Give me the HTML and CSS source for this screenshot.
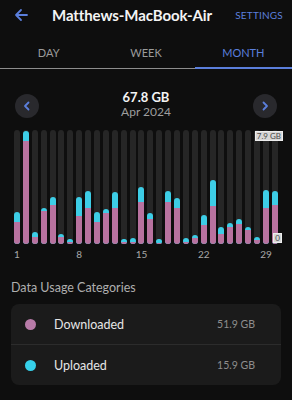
FILE: index.html
```html
<!DOCTYPE html>
<html>
<head>
<meta charset="utf-8">
<link rel="stylesheet" href="styles.css">
</head>
<body>
<div class="app">
  <header class="topbar">
    <svg class="back" width="14" height="14" viewBox="0 0 14 14"><path d="M13 7H2M7 2L2 7l5 5" fill="none" stroke="#5b7fdc" stroke-width="1.8" stroke-linecap="round" stroke-linejoin="round"/></svg>
    <h1 class="title">Matthews-MacBook-Air</h1>
    <span class="settings">SETTINGS</span>
  </header>
  <nav class="tabs">
    <div class="tab">DAY</div>
    <div class="tab">WEEK</div>
    <div class="tab active">MONTH</div>
  </nav>
  <section class="period">
    <div class="circ"><svg width="10" height="10" viewBox="0 0 10 10"><path d="M6.5 1.5L3 5l3.5 3.5" fill="none" stroke="#5b7fdc" stroke-width="1.8" stroke-linecap="round" stroke-linejoin="round"/></svg></div>
    <div class="sum">
      <div class="total">67.8 GB</div>
      <div class="month">Apr 2024</div>
    </div>
    <div class="circ"><svg width="10" height="10" viewBox="0 0 10 10"><path d="M3.5 1.5L7 5 3.5 8.5" fill="none" stroke="#5b7fdc" stroke-width="1.8" stroke-linecap="round" stroke-linejoin="round"/></svg></div>
  </section>
  <section class="chart">
    <div class="bars">
      <div class="track"><div class="fill" style="height:32px"><div class="dl" style="height:22px"></div></div></div>
      <div class="track"><div class="fill" style="height:113px"><div class="dl" style="height:103px"></div></div></div>
      <div class="track"><div class="fill" style="height:12px"><div class="dl" style="height:7px"></div></div></div>
      <div class="track"><div class="fill" style="height:36px"><div class="dl" style="height:33px"></div></div></div>
      <div class="track"><div class="fill" style="height:47px"><div class="dl" style="height:39px"></div></div></div>
      <div class="track"><div class="fill" style="height:10px"><div class="dl" style="height:7px"></div></div></div>
      <div class="track"><div class="fill" style="height:5px"><div class="dl" style="height:2px"></div></div></div>
      <div class="track"><div class="fill" style="height:47px"><div class="dl" style="height:28px"></div></div></div>
      <div class="track"><div class="fill" style="height:53px"><div class="dl" style="height:36px"></div></div></div>
      <div class="track"><div class="fill" style="height:32px"><div class="dl" style="height:22px"></div></div></div>
      <div class="track"><div class="fill" style="height:35px"><div class="dl" style="height:31px"></div></div></div>
      <div class="track"><div class="fill" style="height:52px"><div class="dl" style="height:36px"></div></div></div>
      <div class="track"><div class="fill" style="height:5px"><div class="dl" style="height:2px"></div></div></div>
      <div class="track"><div class="fill" style="height:6px"><div class="dl" style="height:2px"></div></div></div>
      <div class="track"><div class="fill" style="height:57px"><div class="dl" style="height:42px"></div></div></div>
      <div class="track"><div class="fill" style="height:31px"><div class="dl" style="height:25px"></div></div></div>
      <div class="track"><div class="fill" style="height:5px"><div class="dl" style="height:1px"></div></div></div>
      <div class="track"><div class="fill" style="height:53px"><div class="dl" style="height:42px"></div></div></div>
      <div class="track"><div class="fill" style="height:46px"><div class="dl" style="height:36px"></div></div></div>
      <div class="track"><div class="fill" style="height:6px"><div class="dl" style="height:2px"></div></div></div>
      <div class="track"><div class="fill" style="height:9px"><div class="dl" style="height:6px"></div></div></div>
      <div class="track"><div class="fill" style="height:29px"><div class="dl" style="height:19px"></div></div></div>
      <div class="track"><div class="fill" style="height:64px"><div class="dl" style="height:38px"></div></div></div>
      <div class="track"><div class="fill" style="height:17px"><div class="dl" style="height:10px"></div></div></div>
      <div class="track"><div class="fill" style="height:21px"><div class="dl" style="height:17px"></div></div></div>
      <div class="track"><div class="fill" style="height:25px"><div class="dl" style="height:20px"></div></div></div>
      <div class="track"><div class="fill" style="height:17px"><div class="dl" style="height:14px"></div></div></div>
      <div class="track"><div class="fill" style="height:7px"><div class="dl" style="height:4px"></div></div></div>
      <div class="track"><div class="fill" style="height:54px"><div class="dl" style="height:36px"></div></div></div>
      <div class="track"><div class="fill" style="height:53px"><div class="dl" style="height:39px"></div></div></div>
      <span class="tag tag-max">7.9 GB</span>
      <span class="tag tag-zero">0</span>
    </div>
    <div class="days">
      <span class="d1">1</span>
      <span class="d8">8</span>
      <span class="d15">15</span>
      <span class="d22">22</span>
      <span class="d29">29</span>
    </div>
  </section>
  <h2 class="cat-title">Data Usage Categories</h2>
  <div class="card">
    <div class="row">
      <span class="dot dot-dl"></span>
      <span class="name">Downloaded</span>
      <span class="val">51.9 GB</span>
    </div>
    <div class="row">
      <span class="dot dot-ul"></span>
      <span class="name">Uploaded</span>
      <span class="val">15.9 GB</span>
    </div>
  </div>
</div>
</body>
</html>
```
FILE: styles.css
```css
* { box-sizing: border-box; }
html, body { margin: 0; padding: 0; }
body {
  background: #0e0e0e;
  font-family: Lato, "Noto Sans", sans-serif;
  color: #ececec;
  width: 292px;
  height: 400px;
  overflow: hidden;
}
.app { width: 292px; }

.topbar {
  height: 30px;
  display: flex;
  align-items: center;
  padding: 0 0 0 14px;
}
.back { flex: none; }
.title {
  margin: 0 0 0 24px;
  font-size: 15px;
  font-weight: 700;
  color: #f4f4f4;
  white-space: nowrap;
  letter-spacing: -0.1px;
}
.settings {
  margin-left: auto;
  margin-right: 9px;
  font-size: 10px;
  color: #5b7fdc;
  letter-spacing: 0.2px;
  white-space: nowrap;
}

.tabs {
  display: grid;
  grid-template-columns: repeat(3, 1fr);
  border-bottom: 1px solid #8d8d8d;
  height: 39px;
}
.tab {
  display: flex;
  align-items: center;
  justify-content: center;
  font-size: 11px;
  color: #9b9b9b;
  padding-top: 6px;
}
.tab.active {
  color: #5b7fdc;
  border-bottom: 2px solid #5b7fdc;
  margin-bottom: -1px;
  padding-top: 7px;
}

.period {
  display: flex;
  align-items: center;
  justify-content: space-between;
  padding: 22px 15px 0 15px;
  height: 52px;
}
.circ {
  width: 24px;
  height: 24px;
  border-radius: 50%;
  background: #29292d;
  display: flex;
  align-items: center;
  justify-content: center;
}
.sum { text-align: center; margin-top: -3px; }
.total {
  font-size: 13px;
  font-weight: 700;
  color: #f4f4f4;
  line-height: 15px;
}
.month {
  font-size: 12px;
  color: #9e9e9e;
  line-height: 14px;
}

.chart { padding: 9px 0 0 14px; }
.bars {
  position: relative;
  display: grid;
  grid-template-columns: repeat(30, 6px);
  column-gap: 2.9px;
  width: 264px;
  height: 114px;
}
.track {
  height: 114px;
  background: #262626;
  border-radius: 3px;
  display: flex;
  flex-direction: column;
  justify-content: flex-end;
}
.fill {
  background: #3dcde6;
  border-radius: 3px;
  overflow: hidden;
  display: flex;
  flex-direction: column;
  justify-content: flex-end;
}
.dl { background: #b8729f; }
.tag {
  position: absolute;
  font-size: 8px;
  line-height: 8px;
  padding: 0 1px;
  background: #d6d6d6;
  color: #4a4a4a;
  border: 1px solid #ededed;
  white-space: nowrap;
}
.tag-max { right: -5px; top: 1px; }
.tag-zero { right: -4px; bottom: 1px; }

.days {
  display: grid;
  grid-template-columns: repeat(30, 6px);
  column-gap: 2.9px;
  width: 264px;
  height: 20px;
  font-size: 10px;
  color: #a8a8a8;
  padding-top: 4px;
}
.days span { display: flex; justify-content: center; white-space: nowrap; }
.d1 { grid-column: 1; }
.d8 { grid-column: 8; }
.d15 { grid-column: 15; }
.d22 { grid-column: 22; }
.d29 { grid-column: 29; }

.cat-title {
  margin: 16px 0 0 11px;
  font-size: 12.5px;
  font-weight: 400;
  color: #aeaeae;
  line-height: 16px;
}
.card {
  margin: 8px 11px 0 11px;
  background: #1b1b1b;
  border-radius: 8px;
}
.row {
  display: flex;
  align-items: center;
  height: 40px;
  padding: 0 26px 0 14px;
}
.row + .row { border-top: 1px solid #2c2c2c; height: 41px; }
.dot {
  width: 11px;
  height: 11px;
  border-radius: 50%;
  flex: none;
}
.dot-dl { background: #b87ba8; }
.dot-ul { background: #36d0ea; }
.name {
  margin-left: 18px;
  font-size: 12.5px;
  color: #e6e6e6;
}
.val {
  margin-left: auto;
  font-size: 10.5px;
  color: #8e8e8e;
}
```
